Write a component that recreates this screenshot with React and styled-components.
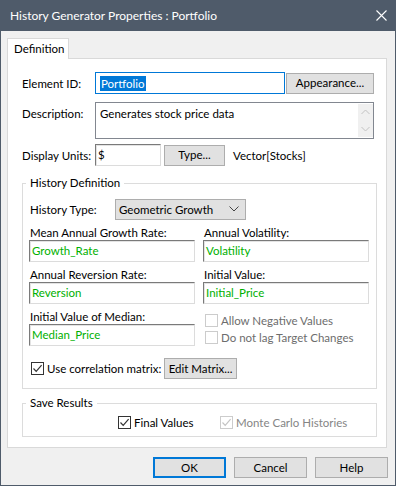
import React from "react";
import styled, { createGlobalStyle } from "styled-components";

const GlobalStyle = createGlobalStyle`
    html, body {
        margin: 0;
        padding: 0;
        background: #f0f0f0;
    }
    body {
        font-family: Lato, "Noto Sans", sans-serif;
        font-size: 11.5px;
        color: #000000;
        white-space: nowrap;
    }
    * {
        box-sizing: border-box;
    }
`;

const Check = ({ checked, disabled }) => (
    <CheckBox $disabled={disabled}>
        {checked && (
            <svg width="11" height="11" viewBox="0 0 11 11">
                <polyline
                    points="1.5,5.5 4.2,8.3 9.6,2.2"
                    fill="none"
                    stroke={disabled ? "#c4c4c4" : "#333333"}
                    strokeWidth="1.2"
                />
            </svg>
        )}
    </CheckBox>
);

const App = () => {
    return (
        <>
            <GlobalStyle />
            <Window>
                <TitleBar>
                    <span>History Generator Properties : Portfolio</span>
                    <svg width="11" height="11" viewBox="0 0 11 11">
                        <path d="M0.5 0.5 L10.5 10.5 M10.5 0.5 L0.5 10.5" stroke="#ffffff" strokeWidth="1.1" />
                    </svg>
                </TitleBar>
                <Body>
                    <TabStrip>
                        <Tab>Definition</Tab>
                    </TabStrip>
                    <Panel>
                        <Row $mb={8}>
                            <FormLabel>Element ID:</FormLabel>
                            <FocusInput>
                                <Selected>Portfolio</Selected>
                            </FocusInput>
                            <Button $w={88} $ml={1}>Appearance...</Button>
                        </Row>
                        <Row $mb={5} $top>
                            <FormLabel $pt={4}>Description:</FormLabel>
                            <TextArea>
                                <TextAreaText>Generates stock price data</TextAreaText>
                                <ScrollBar>
                                    <svg width="9" height="6" viewBox="0 0 9 6">
                                        <polyline points="0.5,5 4.5,1 8.5,5" fill="none" stroke="#c2c2c2" />
                                    </svg>
                                    <svg width="9" height="6" viewBox="0 0 9 6">
                                        <polyline points="0.5,1 4.5,5 8.5,1" fill="none" stroke="#c2c2c2" />
                                    </svg>
                                </ScrollBar>
                            </TextArea>
                        </Row>
                        <Row>
                            <FormLabel>Display Units:</FormLabel>
                            <SunkenInput $w={66}>$</SunkenInput>
                            <Button $w={61} $ml={3}>Type...</Button>
                            <Plain $ml={8}>Vector[Stocks]</Plain>
                        </Row>

                        <Group $mt={9}>
                            <Legend>History Definition</Legend>
                            <Row $mt={8}>
                                <FormLabel $w={86} $pl={1}>History Type:</FormLabel>
                                <Select>
                                    <span>Geometric Growth</span>
                                    <svg width="10" height="6" viewBox="0 0 10 6">
                                        <polyline points="0.5,0.5 5,5 9.5,0.5" fill="none" stroke="#444444" />
                                    </svg>
                                </Select>
                            </Row>
                            <FieldGrid>
                                <Field>
                                    <FieldLabel>Mean Annual Growth Rate:</FieldLabel>
                                    <SunkenInput $green>Growth_Rate</SunkenInput>
                                </Field>
                                <Field>
                                    <FieldLabel>Annual Volatility:</FieldLabel>
                                    <SunkenInput $green>Volatility</SunkenInput>
                                </Field>
                                <Field>
                                    <FieldLabel>Annual Reversion Rate:</FieldLabel>
                                    <SunkenInput $green>Reversion</SunkenInput>
                                </Field>
                                <Field>
                                    <FieldLabel>Initial Value:</FieldLabel>
                                    <SunkenInput $green>Initial_Price</SunkenInput>
                                </Field>
                                <Field>
                                    <FieldLabel>Initial Value of Median:</FieldLabel>
                                    <SunkenInput $green>Median_Price</SunkenInput>
                                </Field>
                                <CheckColumn>
                                    <CheckRow $disabled $h={17}>
                                        <Check disabled />
                                        Allow Negative Values
                                    </CheckRow>
                                    <CheckRow $disabled $h={17}>
                                        <Check disabled />
                                        Do not lag Target Changes
                                    </CheckRow>
                                </CheckColumn>
                            </FieldGrid>
                            <Row $mt={12}>
                                <CheckRow $w={135} $pl={2}>
                                    <Check checked />
                                    Use correlation matrix:
                                </CheckRow>
                                <Button $w={73}>Edit Matrix...</Button>
                            </Row>
                        </Group>

                        <Group $mt={6} $pb={5}>
                            <Legend>Save Results</Legend>
                            <Row $mt={2} $pl={89}>
                                <CheckRow $w={102}>
                                    <Check checked />
                                    Final Values
                                </CheckRow>
                                <CheckRow $disabled $light>
                                    <Check checked disabled />
                                    Monte Carlo Histories
                                </CheckRow>
                            </Row>
                        </Group>
                    </Panel>

                    <ButtonBar>
                        <Button $w={73} $default>OK</Button>
                        <Button $w={73}>Cancel</Button>
                        <Button $w={73}>Help</Button>
                    </ButtonBar>
                </Body>
            </Window>
        </>
    );
};

export default App;

const Window = styled.div`
    width: 396px;
    height: 486px;
    border: 1px solid #4f5b6a;
    border-top: none;
    background: #f0f0f0;
    display: flex;
    flex-direction: column;
`;

const TitleBar = styled.div`
    height: 31px;
    flex-shrink: 0;
    background: #4f5b6a;
    color: #ffffff;
    display: flex;
    align-items: center;
    justify-content: space-between;
    padding: 0 8px 1px 9px;
    font-size: 12px;
`;

const Body = styled.div`
    flex: 1;
    display: flex;
    flex-direction: column;
    padding: 7px 7px 0 6px;
`;

const TabStrip = styled.div`
    display: flex;
`;

const Tab = styled.div`
    width: 62px;
    height: 21px;
    padding: 1px 0 0 6px;
    line-height: 17px;
    background: #ffffff;
    border: 1px solid #d9d9d9;
    border-bottom: none;
    margin-bottom: -1px;
    position: relative;
    z-index: 1;
`;

const Panel = styled.div`
    margin-right: 1px;
    background: #ffffff;
    border: 1px solid #d9d9d9;
    padding: 13px 9px 10px 14px;
    display: flex;
    flex-direction: column;
`;

const Row = styled.div`
    display: flex;
    align-items: ${p => (p.$top ? "flex-start" : "center")};
    margin-top: ${p => p.$mt || 0}px;
    margin-bottom: ${p => p.$mb || 0}px;
    padding-left: ${p => p.$pl || 0}px;
`;

const FormLabel = styled.div`
    width: ${p => p.$w || 73}px;
    flex-shrink: 0;
    padding-top: ${p => p.$pt || 0}px;
    padding-left: ${p => p.$pl || 0}px;
    line-height: 15px;
`;

const Plain = styled.span`
    margin-left: ${p => p.$ml || 0}px;
`;

const FocusInput = styled.div`
    width: 190px;
    height: 22px;
    border: 1px solid #0078d7;
    background: #ffffff;
    padding: 0 0 0 4px;
    display: flex;
    align-items: center;
`;

const Selected = styled.span`
    background: #0078d7;
    color: #ffffff;
    line-height: 15px;
    padding: 0 1px;
`;

const SunkenInput = styled.div`
    width: ${p => (p.$w ? `${p.$w}px` : "100%")};
    height: 22px;
    background: #ffffff;
    border-top: 1px solid #7a7a7a;
    border-left: 1px solid #7a7a7a;
    border-right: 1px solid #dcdcdc;
    border-bottom: 1px solid #dcdcdc;
    box-shadow: inset 1px 1px 0 #e3e3e3;
    padding-left: 2px;
    line-height: 20px;
    color: ${p => (p.$green ? "#00b000" : "#000000")};
`;

const TextArea = styled.div`
    width: 279px;
    height: 37px;
    border: 1px solid #828790;
    background: #ffffff;
    display: flex;
`;

const TextAreaText = styled.div`
    flex: 1;
    padding: 3px 0 0 4px;
    line-height: 15px;
`;

const ScrollBar = styled.div`
    width: 15px;
    margin: 1px 0;
    background: #f0f0f0;
    display: flex;
    flex-direction: column;
    align-items: center;
    justify-content: space-around;
`;

const Button = styled.div`
    width: ${p => p.$w}px;
    height: 21px;
    margin-left: ${p => p.$ml || 0}px;
    flex-shrink: 0;
    background: #e1e1e1;
    border: ${p => (p.$default ? "2px solid #0078d7" : "1px solid #adadad")};
    display: flex;
    align-items: center;
    justify-content: center;
    padding-bottom: 1px;
`;

const Group = styled.fieldset`
    margin: ${p => p.$mt || 0}px 0 0 0;
    padding: 0 6px ${p => (p.$pb !== undefined ? p.$pb : 9)}px 6px;
    border: 1px solid #dcdcdc;
    min-width: 0;
`;

const Legend = styled.legend`
    padding: 0 4px;
    margin-left: -3px;
    line-height: 16px;
`;

const Select = styled.div`
    width: 131px;
    height: 21px;
    background: #e1e1e1;
    border: 1px solid #adadad;
    display: flex;
    align-items: center;
    justify-content: space-between;
    padding: 0 6px 1px 3px;
`;

const FieldGrid = styled.div`
    display: grid;
    grid-template-columns: 166px 166px;
    column-gap: 8px;
    row-gap: 5px;
    margin-top: 5px;
`;

const Field = styled.div`
    display: flex;
    flex-direction: column;
`;

const FieldLabel = styled.div`
    line-height: 15px;
    padding-left: 1px;
`;

const CheckColumn = styled.div`
    display: flex;
    flex-direction: column;
    padding: 3px 0 0 2px;
`;

const CheckRow = styled.div`
    display: flex;
    align-items: center;
    gap: 3px;
    height: ${p => p.$h || 18}px;
    width: ${p => (p.$w ? `${p.$w}px` : "auto")};
    flex-shrink: 0;
    padding-left: ${p => p.$pl || 0}px;
    color: ${p => (p.$disabled ? (p.$light ? "#858585" : "#6d6d6d") : "#000000")};
`;

const CheckBox = styled.div`
    width: 13px;
    height: 13px;
    flex-shrink: 0;
    border: 1px solid ${p => (p.$disabled ? "#cccccc" : "#333333")};
    background: #ffffff;
    display: flex;
    align-items: center;
    justify-content: center;
`;

const ButtonBar = styled.div`
    display: flex;
    justify-content: flex-end;
    gap: 8px;
    margin-top: 9px;
`;
